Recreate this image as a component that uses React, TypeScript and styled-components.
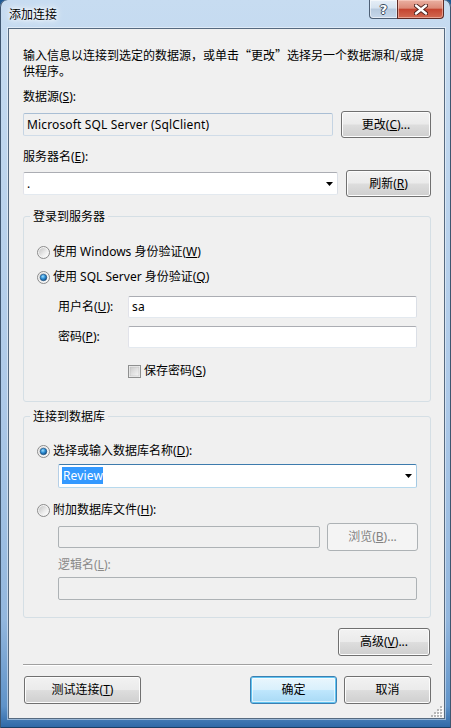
import React, { useId } from "react";
import styled, { createGlobalStyle, css } from "styled-components";

const FONT = `"Noto Sans", "Noto Sans CJK SC", sans-serif`;
const CJK = `"Noto Sans CJK SC", "Noto Sans", sans-serif`;

const Global = createGlobalStyle`
  html, body { margin: 0; padding: 0; background: #1f5a94; }
  body { font-family: ${FONT}; font-size: 12px; color: #000; }
  * { box-sizing: border-box; }
`;

const Window = styled.div`
  width: 451px;
  height: 728px;
  display: flex;
  flex-direction: column;
  padding: 0 6px 9px 8px;
  border-radius: 7px 7px 0 0;
  background: linear-gradient(
    180deg,
    #c7dcf1 0%,
    #bcd4ed 25%,
    #adc9e8 55%,
    #93b7de 85%,
    #5f93c9 97%,
    #2d67a6 100%
  );
  box-shadow: inset 1px 0 0 #3f5670, inset -1px 0 0 #3f5670, inset 0 -1px 0 #1b3f66;
`;

const TitleBar = styled.div`
  height: 28px;
  display: flex;
  justify-content: space-between;
  align-items: flex-start;
  flex-shrink: 0;
`;

const Title = styled.div`
  margin: 6px 0 0 1px;
  font-family: ${CJK};
  font-size: 12px;
  line-height: 16px;
  color: #000;
  text-shadow: 0 0 6px #fff, 0 0 10px #fff, 0 0 3px rgba(255, 255, 255, 0.9);
`;

const Caption = styled.div`
  display: flex;
  margin-right: 1px;
`;

const CaptionButton = styled.div<{ $kind: "help" | "close" }>`
  height: 19px;
  display: flex;
  align-items: center;
  justify-content: center;
  border: 1px solid #4d5f75;
  border-top: none;
  ${(p) =>
    p.$kind === "help"
      ? css`
          width: 28px;
          border-right: none;
          border-radius: 0 0 0 4px;
          background: linear-gradient(180deg, #e6eef7 0%, #d5e2ef 45%, #b6c9de 50%, #c6d7ea 100%);
          box-shadow: inset 0 0 0 1px rgba(255, 255, 255, 0.55);
        `
      : css`
          width: 47px;
          border-color: #5e2a25;
          border-radius: 0 0 4px 0;
          background: linear-gradient(180deg, #eab0a2 0%, #dc8a78 45%, #c54531 52%, #d26a52 100%);
          box-shadow: inset 0 0 0 1px rgba(255, 220, 210, 0.5);
        `}
`;

const HelpGlyph = styled.span`
  font-family: "DejaVu Sans", sans-serif;
  font-weight: bold;
  font-size: 13px;
  line-height: 13px;
  color: #fff;
  margin-top: 1px;
  text-shadow: 1px 0 0 #3a4a5d, -1px 0 0 #3a4a5d, 0 1px 0 #3a4a5d, 0 -1px 0 #3a4a5d;
`;

const Client = styled.div`
  position: relative;
  flex: 1;
  display: flex;
  flex-direction: column;
  border: 1px solid #566a80;
  background: #f0f0f0;
  padding: 18px 13px 0 14px;
  box-shadow: 0 0 0 1px rgba(255, 255, 255, 0.45);
`;

const Description = styled.div`
  font-family: ${CJK};
  line-height: 16px;
  width: 408px;
`;

const Label = styled.div<{ $mt: number; $indent?: number; $disabled?: boolean }>`
  margin-top: ${(p) => p.$mt}px;
  padding-left: ${(p) => p.$indent ?? 0}px;
  line-height: 16px;
  height: 16px;
  white-space: nowrap;
  color: ${(p) => (p.$disabled ? "#8a8a8a" : "#000")};
`;

const Key = styled.span`
  text-decoration: underline;
  text-underline-offset: 1px;
`;

const Row = styled.div<{ $mt: number; $h: number; $indent?: number }>`
  margin-top: ${(p) => p.$mt}px;
  margin-left: ${(p) => p.$indent ?? 0}px;
  height: ${(p) => p.$h}px;
  display: flex;
  align-items: center;
  justify-content: space-between;
`;

const Box = styled.div<{ $w: number; $h: number; $variant: "normal" | "readonly" | "disabled" | "focus" }>`
  width: ${(p) => p.$w}px;
  height: ${(p) => p.$h}px;
  flex-shrink: 0;
  display: flex;
  align-items: center;
  padding: 0 4px 0 3px;
  line-height: 16px;
  white-space: nowrap;
  letter-spacing: 0.15px;
  border: 1px solid;
  border-radius: 2px;
  ${(p) =>
    p.$variant === "normal" &&
    css`
      background: #fff;
      border-color: #abadb3 #dbdfe6 #e3e9ef #e2e3ea;
    `}
  ${(p) =>
    p.$variant === "readonly" &&
    css`
      background: #f0f0f0;
      border-color: #a9bed4 #c5d4e3 #d0dce8 #c5d4e3;
    `}
  ${(p) =>
    p.$variant === "disabled" &&
    css`
      background: #f0f0f0;
      border-color: #adb2b5;
    `}
  ${(p) =>
    p.$variant === "focus" &&
    css`
      background: #fff;
      border-color: #3d7bad #a4c9e3 #b7d9ed #b5cfe7;
    `}
`;

const BoxText = styled.span`
  flex: 1;
`;

const Selected = styled.span`
  background: #3399ff;
  color: #fff;
  padding: 0 0 0 1px;
  line-height: 16px;
`;

const Button = styled.div<{ $w: number; $h: number; $variant?: "normal" | "default" | "disabled" }>`
  width: ${(p) => p.$w}px;
  height: ${(p) => p.$h}px;
  flex-shrink: 0;
  display: flex;
  align-items: center;
  justify-content: center;
  border-radius: 3px;
  border: 1px solid #707070;
  background: linear-gradient(180deg, #f2f2f2 0%, #ebebeb 48%, #dddddd 52%, #cfcfcf 100%);
  box-shadow: inset 0 0 0 1px #fcfcfc;
  white-space: nowrap;
  line-height: 16px;
  ${(p) =>
    p.$variant === "default" &&
    css`
      border-color: #3c7fb1;
      background: linear-gradient(180deg, #eaf6fd 0%, #d9f0fc 48%, #bee6fd 52%, #a7d9f5 100%);
      box-shadow: inset 0 0 0 1px #61c4f1, inset 0 0 0 2px rgba(255, 255, 255, 0.6);
    `}
  ${(p) =>
    p.$variant === "disabled" &&
    css`
      border-color: #adb2b5;
      background: #f4f4f4;
      box-shadow: none;
      color: #838383;
    `}
`;

const Fieldset = styled.fieldset<{ $mt: number }>`
  margin: ${(p) => p.$mt}px 0 0 0;
  padding: 0;
  border: 1px solid #d5dfe5;
  border-radius: 3px;
  min-width: 0;
`;

const Legend = styled.legend`
  margin-left: 6px;
  padding: 0 3px;
  line-height: 16px;
  font-family: ${CJK};
`;

const GroupBody = styled.div<{ $pt: number; $pb: number }>`
  padding: ${(p) => p.$pt}px 12px ${(p) => p.$pb}px 13px;
  display: flex;
  flex-direction: column;
`;

const OptionRow = styled.div<{ $mt: number; $indent?: number }>`
  margin-top: ${(p) => p.$mt}px;
  margin-left: ${(p) => p.$indent ?? 0}px;
  height: 16px;
  display: flex;
  align-items: center;
  gap: 3px;
  line-height: 16px;
  white-space: nowrap;
`;

const FieldRow = styled.div<{ $mt: number }>`
  margin-top: ${(p) => p.$mt}px;
  padding-left: 21px;
  display: flex;
  align-items: center;
`;

const FieldLabel = styled.div`
  width: 70px;
  line-height: 16px;
  white-space: nowrap;
`;

const AdvancedWrap = styled.div`
  margin-top: 10px;
  display: flex;
  justify-content: flex-end;
  padding-right: 1px;
`;

const Separator = styled.div`
  margin-top: 8px;
  width: 409px;
  border-top: 1px solid #a0a0a0;
  border-bottom: 1px solid #ffffff;
`;

const Footer = styled.div`
  margin-top: 10px;
  display: flex;
  align-items: center;
  padding-left: 1px;
`;

const FooterRight = styled.div`
  margin-left: auto;
  display: flex;
  gap: 7px;
`;

const Grip = styled.svg`
  position: absolute;
  right: 1px;
  bottom: 1px;
`;

const Radio = ({ checked }: { checked?: boolean }) => {
  const id = useId().replace(/:/g, "");
  return (
    <svg width="13" height="13" viewBox="0 0 13 13" style={{ flexShrink: 0 }}>
      <defs>
        <linearGradient id={`bg${id}`} x1="0" y1="0" x2="1" y2="1">
          <stop offset="0" stopColor="#c4c4c4" />
          <stop offset="0.6" stopColor="#ececec" />
          <stop offset="1" stopColor="#ffffff" />
        </linearGradient>
        <radialGradient id={`dot${id}`} cx="0.4" cy="0.35" r="0.75">
          <stop offset="0" stopColor="#9ee0ff" />
          <stop offset="0.45" stopColor="#2e8fd6" />
          <stop offset="1" stopColor="#0b3b6b" />
        </radialGradient>
      </defs>
      <circle cx="6.5" cy="6.5" r="6" fill="#f4f4f4" stroke="#8a8a8a" />
      <circle cx="6.5" cy="6.5" r="4.6" fill={`url(#bg${id})`} />
      {checked && <circle cx="6.5" cy="6.5" r="3.3" fill={`url(#dot${id})`} stroke="#1a4d7d" strokeWidth="0.6" />}
    </svg>
  );
};

const Checkbox = () => {
  const id = useId().replace(/:/g, "");
  return (
    <svg width="13" height="13" viewBox="0 0 13 13" style={{ flexShrink: 0 }}>
      <defs>
        <linearGradient id={`cb${id}`} x1="0" y1="0" x2="1" y2="1">
          <stop offset="0" stopColor="#cbcbcb" />
          <stop offset="1" stopColor="#f6f6f6" />
        </linearGradient>
      </defs>
      <rect x="0.5" y="0.5" width="12" height="12" fill="#f4f4f4" stroke="#8e8f8f" />
      <rect x="2" y="2" width="9" height="9" fill={`url(#cb${id})`} stroke="#b8b8b8" strokeWidth="0.5" />
    </svg>
  );
};

const Arrow = () => (
  <svg width="7" height="4" viewBox="0 0 7 4" style={{ flexShrink: 0 }}>
    <path d="M0 0 H7 L3.5 4 Z" fill="#000" />
  </svg>
);

const CloseX = () => (
  <svg width="14" height="11" viewBox="0 0 14 11">
    <path d="M2 1.5 L12 9.5 M12 1.5 L2 9.5" stroke="#4a1f1a" strokeWidth="4.2" strokeLinecap="round" />
    <path d="M2 1.5 L12 9.5 M12 1.5 L2 9.5" stroke="#ffffff" strokeWidth="2.4" strokeLinecap="round" />
  </svg>
);

export default function App() {
  return (
    <>
      <Global />
      <Window>
        <TitleBar>
          <Title>添加连接</Title>
          <Caption>
            <CaptionButton $kind="help">
              <HelpGlyph>?</HelpGlyph>
            </CaptionButton>
            <CaptionButton $kind="close">
              <CloseX />
            </CaptionButton>
          </Caption>
        </TitleBar>
        <Client>
          <Description>
            输入信息以连接到选定的数据源，或单击“更改”选择另一个数据源和/或提供程序。
          </Description>

          <Label $mt={10}>
            数据源(<Key>S</Key>):
          </Label>
          <Row $mt={6} $h={27}>
            <Box $w={310} $h={23} $variant="readonly">
              <BoxText>Microsoft SQL Server (SqlClient)</BoxText>
            </Box>
            <Button $w={90} $h={27}>
              更改(<Key>C</Key>)...
            </Button>
          </Row>

          <Label $mt={11}>
            服务器名(<Key>E</Key>):
          </Label>
          <Row $mt={5} $h={27}>
            <Box $w={315} $h={23} $variant="normal">
              <BoxText>.</BoxText>
              <Arrow />
            </Box>
            <Button $w={85} $h={27}>
              刷新(<Key>R</Key>)
            </Button>
          </Row>

          <Fieldset $mt={11}>
            <Legend>登录到服务器</Legend>
            <GroupBody $pt={20} $pb={22}>
              <OptionRow $mt={0}>
                <Radio />
                <span>
                  使用 Windows 身份验证(<Key>W</Key>)
                </span>
              </OptionRow>
              <OptionRow $mt={9}>
                <Radio checked />
                <span>
                  使用 SQL Server 身份验证(<Key>Q</Key>)
                </span>
              </OptionRow>
              <FieldRow $mt={11}>
                <FieldLabel>
                  用户名(<Key>U</Key>):
                </FieldLabel>
                <Box $w={289} $h={22} $variant="normal">
                  <BoxText>sa</BoxText>
                </Box>
              </FieldRow>
              <FieldRow $mt={8}>
                <FieldLabel>
                  密码(<Key>P</Key>):
                </FieldLabel>
                <Box $w={289} $h={22} $variant="normal" />
              </FieldRow>
              <OptionRow $mt={15} $indent={91}>
                <Checkbox />
                <span>
                  保存密码(<Key>S</Key>)
                </span>
              </OptionRow>
            </GroupBody>
          </Fieldset>

          <Fieldset $mt={6}>
            <Legend>连接到数据库</Legend>
            <GroupBody $pt={19} $pb={17}>
              <OptionRow $mt={0}>
                <Radio checked />
                <span>
                  选择或输入数据库名称(<Key>D</Key>):
                </span>
              </OptionRow>
              <Row $mt={5} $h={24} $indent={21}>
                <Box $w={359} $h={24} $variant="focus">
                  <BoxText>
                    <Selected>Review</Selected>
                  </BoxText>
                  <Arrow />
                </Box>
              </Row>
              <OptionRow $mt={14}>
                <Radio />
                <span>
                  附加数据库文件(<Key>H</Key>):
                </span>
              </OptionRow>
              <Row $mt={5} $h={28} $indent={21}>
                <Box $w={262} $h={22} $variant="disabled" />
                <Button $w={91} $h={28} $variant="disabled">
                  浏览(<Key>B</Key>)...
                </Button>
              </Row>
              <Label $mt={6} $indent={21} $disabled>
                逻辑名(<Key>L</Key>):
              </Label>
              <Row $mt={4} $h={23} $indent={21}>
                <Box $w={359} $h={23} $variant="disabled" />
              </Row>
            </GroupBody>
          </Fieldset>

          <AdvancedWrap>
            <Button $w={92} $h={28}>
              高级(<Key>V</Key>)...
            </Button>
          </AdvancedWrap>

          <Separator />

          <Footer>
            <Button $w={117} $h={28}>
              测试连接(<Key>T</Key>)
            </Button>
            <FooterRight>
              <Button $w={87} $h={28} $variant="default">
                确定
              </Button>
              <Button $w={87} $h={28}>
                取消
              </Button>
            </FooterRight>
          </Footer>

          <Grip width="12" height="12" viewBox="0 0 12 12">
            {[
              [9, 1],
              [9, 4],
              [6, 4],
              [9, 7],
              [6, 7],
              [3, 7],
              [9, 10],
              [6, 10],
              [3, 10],
              [0, 10],
            ].map(([x, y]) => (
              <g key={`${x}-${y}`}>
                <rect x={x + 1} y={y + 1} width="2" height="2" fill="#ffffff" />
                <rect x={x} y={y} width="2" height="2" fill="#b8b8b8" />
              </g>
            ))}
          </Grip>
        </Client>
      </Window>
    </>
  );
}
